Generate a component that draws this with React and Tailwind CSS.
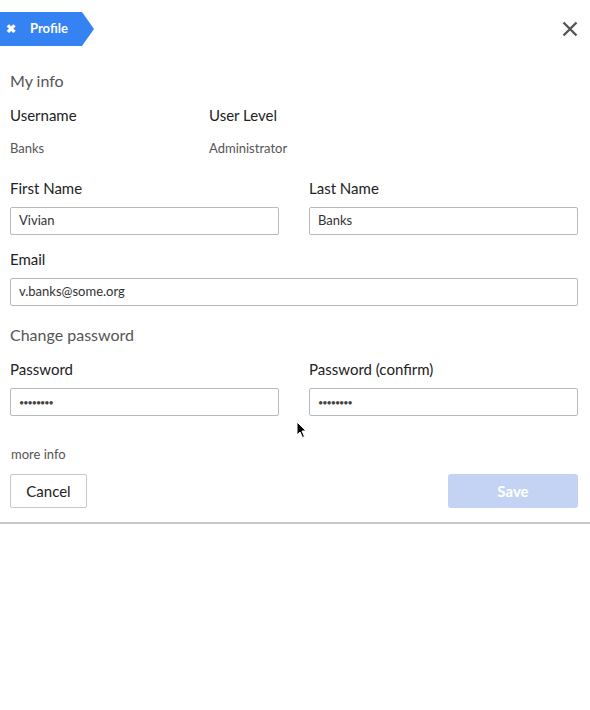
import React from "react";

const font = { fontFamily: '"Source Sans Pro", Lato, "Noto Sans", sans-serif' };

function Input({ value, pw }) {
  return (
    <div className="h-[28px] border border-[#b9b9c0] rounded-[2px] flex items-center px-[8px] text-[13px] text-[#333]">
      {pw ? <span className="tracking-[-1px] text-[9px] leading-none text-[#444]">••••••••</span> : value}
    </div>
  );
}

function Field({ label, children }) {
  return (
    <div className="flex flex-col">
      <div className="text-[15px] text-[#222] leading-[20px] mb-[9px]">{label}</div>
      {children}
    </div>
  );
}

export default function App() {
  return (
    <div className="w-[590px] h-[710px] bg-white relative" style={font}>
      <div className="border-b-2 border-[#c8c8c8] pb-[14px]">
        <div className="flex items-start justify-between pt-[12px] pr-[12px]">
          <div className="relative h-[34px] flex items-center">
            <div className="h-[34px] bg-[#3583f3] flex items-center pl-[6px] pr-[14px] text-white font-bold text-[13px]">
              <span className="text-[12px] mr-[14px]">✖</span>
              <span>Profile</span>
            </div>
            <div className="w-0 h-0 border-y-[17px] border-y-transparent border-l-[12px] border-l-[#3583f3]" />
          </div>
          <svg width="16" height="16" viewBox="0 0 16 16" className="mt-[9px]">
            <path d="M1.5 1.5 L14.5 14.5 M14.5 1.5 L1.5 14.5" stroke="#555" strokeWidth="2.4" />
          </svg>
        </div>

        <div className="px-[10px] pr-[12px]">
          <div className="text-[16px] text-[#555] mt-[24px] leading-[22px]">My info</div>

          <div className="flex mt-[13px]">
            <div className="w-[199px]">
              <div className="text-[15px] text-[#222] leading-[20px]">Username</div>
              <div className="text-[13px] text-[#555] mt-[14px] leading-[18px]">Banks</div>
            </div>
            <div>
              <div className="text-[15px] text-[#222] leading-[20px]">User Level</div>
              <div className="text-[13px] text-[#555] mt-[14px] leading-[18px]">Administrator</div>
            </div>
          </div>

          <div className="grid grid-cols-[269px_269px] gap-x-[30px] mt-[21px]">
            <Field label="First Name"><Input value="Vivian" /></Field>
            <Field label="Last Name"><Input value="Banks" /></Field>
          </div>

          <div className="mt-[14px]">
            <Field label="Email"><Input value="v.banks@some.org" /></Field>
          </div>

          <div className="text-[16px] text-[#555] mt-[18px] leading-[22px]">Change password</div>

          <div className="grid grid-cols-[269px_269px] gap-x-[30px] mt-[13px]">
            <Field label="Password"><Input pw /></Field>
            <Field label="Password (confirm)"><Input pw /></Field>
          </div>

          <div className="text-[13px] text-[#555] mt-[29px] leading-[18px] pl-[1px]">more info</div>

          <div className="flex justify-between mt-[11px]">
            <button className="w-[77px] h-[34px] border border-[#c8c8c8] rounded-[2px] text-[15px] text-[#222] bg-white">Cancel</button>
            <button className="w-[130px] h-[34px] rounded-[3px] bg-[#c4d3f4] text-white font-bold text-[15px]">Save</button>
          </div>
        </div>
      </div>

      <svg className="absolute left-[296px] top-[421px]" width="12" height="18" viewBox="0 0 12 18">
        <path d="M1 1 L1 14 L4 11 L6.5 16.5 L8.5 15.5 L6 10 L10 10 Z" fill="#000" stroke="#fff" strokeWidth="1" />
      </svg>
    </div>
  );
}
